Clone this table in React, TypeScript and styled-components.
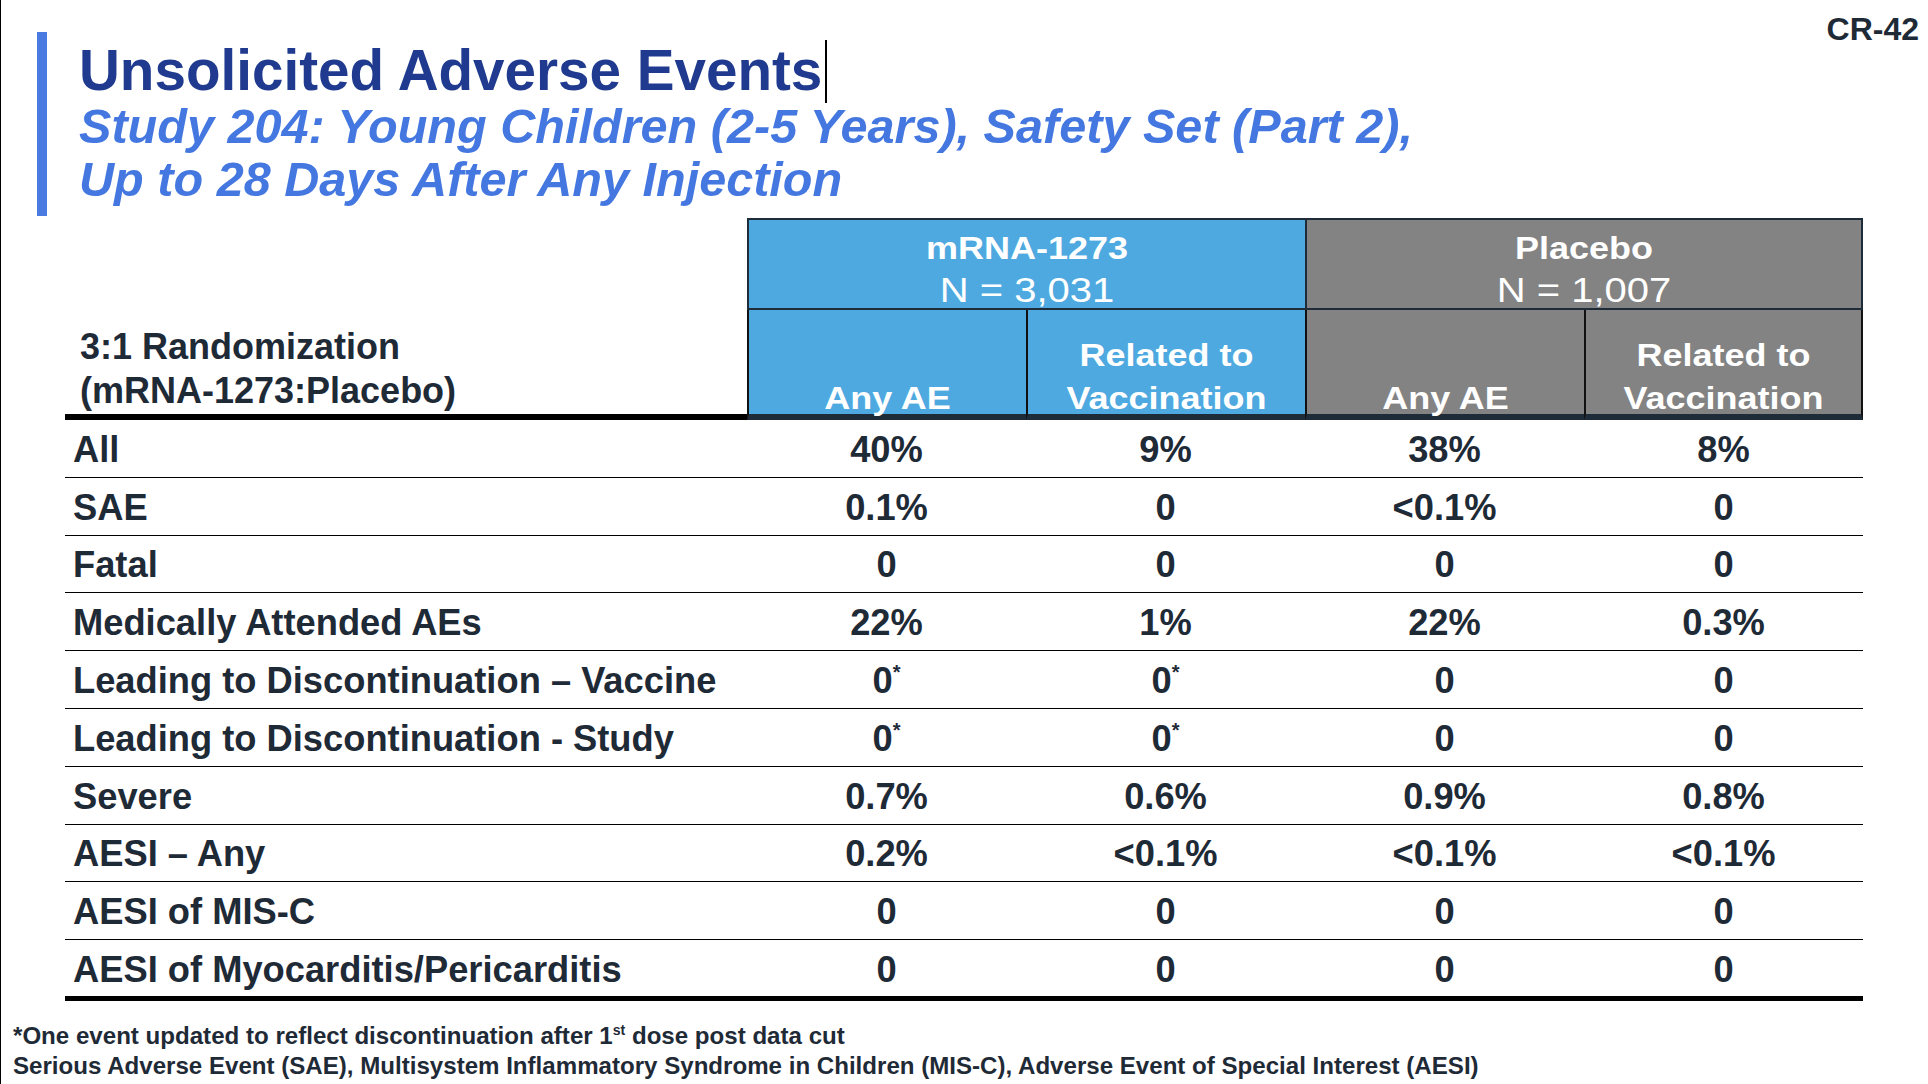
import React from "react";
import styled, { createGlobalStyle } from "styled-components";

const GlobalStyle = createGlobalStyle`
  html, body {
    margin: 0;
    padding: 0;
    overflow: hidden;
    background: #fff;
  }
  * {
    box-sizing: border-box;
  }
`;

// Page
const Page = styled.div`
  width: 1928px;
  height: 1084px;
  border-left: 1px solid #000;
  background: #fff;
  font-family: "Liberation Sans", Arial, sans-serif;
  color: #1f2a37;
  display: flex;
  flex-direction: column;
`;

// Top area
const TopBar = styled.div`
  display: flex;
  justify-content: space-between;
  align-items: flex-start;
`;

const TitleBlock = styled.div`
  margin: 32px 0 0 36px;
  height: 184px;
  border-left: 10px solid #4a7be0;
  padding: 10px 0 0 32px;
`;

const Title = styled.h1`
  position: relative;
  display: inline-block;
  margin: 0;
  font-size: 56.6px;
  line-height: 58px;
  font-weight: 700;
  color: #1f3a8e;
`;

const Caret = styled.span`
  position: absolute;
  right: -5px;
  top: -2px;
  width: 2px;
  height: 63px;
  background: #000;
`;

const Subtitle = styled.h2`
  margin: 0;
  font-size: 48.6px;
  line-height: 53px;
  font-weight: 700;
  font-style: italic;
  color: #4478e0;
`;

const SlideNo = styled.div`
  margin: 11px 9px 0 0;
  font-size: 32px;
  line-height: 36px;
  font-weight: 700;
  color: #1f2a37;
`;

// Table
const Table = styled.div`
  margin: 2px 0 0 64px;
  width: 1798px;
`;

const HeadGrid = styled.div`
  display: grid;
  grid-template-columns: 682px repeat(4, 1fr);
  grid-template-rows: 92px 110px;
`;

const LabelHead = styled.div`
  grid-column: 1;
  grid-row: 1 / span 2;
  display: flex;
  flex-direction: column;
  justify-content: flex-end;
  padding: 0 0 1px 15px;
  border-bottom: 6px solid #000;
  font-size: 36px;
  line-height: 44px;
  font-weight: 700;
`;

const GroupHead = styled.div<{ $bg: string; $last?: boolean }>`
  grid-column: span 2;
  background: ${({ $bg }) => $bg};
  border-top: 2px solid #1e2b38;
  border-left: 2px solid #1e2b38;
  border-right: ${({ $last }) => ($last ? "2px solid #1e2b38" : "none")};
  border-bottom: 2px solid #1e2b38;
  padding-top: 7px;
  display: flex;
  flex-direction: column;
  align-items: center;
  color: #fff;
`;

const GroupName = styled.div`
  font-size: 36px;
  line-height: 50px;
  font-weight: 700;
  transform: scaleY(0.86);
  transform-origin: 50% 0;
`;

const GroupN = styled.div`
  font-size: 40px;
  line-height: 46px;
  font-weight: 400;
  margin-top: -7px;
  transform: scaleY(0.86);
  transform-origin: 50% 0;
`;

const SubHead = styled.div<{ $bg: string; $last?: boolean }>`
  background: ${({ $bg }) => $bg};
  border-left: 2px solid #111;
  border-right: ${({ $last }) => ($last ? "2px solid #111" : "none")};
  border-bottom: 6px solid #1e2b38;
  display: flex;
  flex-direction: column;
  justify-content: flex-end;
  align-items: center;
  color: #fff;
`;

const SubText = styled.div`
  font-size: 36px;
  line-height: 50px;
  font-weight: 700;
  text-align: center;
  margin-bottom: -6px;
  transform: scaleY(0.86);
  transform-origin: 50% 100%;
`;

const Row = styled.div<{ $last?: boolean }>`
  display: grid;
  grid-template-columns: 682px repeat(4, 1fr);
  align-items: center;
  padding-top: 3px;
  height: ${({ $last }) => ($last ? "61px" : "57.8px")};
  border-bottom: ${({ $last }) => ($last ? "5px" : "1px")} solid #000;
  font-size: 36.3px;
  font-weight: 700;
`;

const RowLabel = styled.div`
  padding-left: 8px;
  white-space: nowrap;
`;

const Value = styled.div`
  text-align: center;
`;

const Star = styled.sup`
  font-size: 20px;
  vertical-align: 14px;
  line-height: 0;
`;

// Footnotes
const Notes = styled.div`
  margin: 20px 0 0 12px;
  font-size: 24.1px;
  line-height: 30px;
  font-weight: 700;
`;

const Sup = styled.sup`
  font-size: 14px;
  vertical-align: 9px;
  line-height: 0;
`;

const BLUE = "#4ea9e0";
const GREY = "#838383";

const rows: string[][] = [
  ["All", "40%", "9%", "38%", "8%"],
  ["SAE", "0.1%", "0", "<0.1%", "0"],
  ["Fatal", "0", "0", "0", "0"],
  ["Medically Attended AEs", "22%", "1%", "22%", "0.3%"],
  ["Leading to Discontinuation \u2013 Vaccine", "0*", "0*", "0", "0"],
  ["Leading to Discontinuation - Study", "0*", "0*", "0", "0"],
  ["Severe", "0.7%", "0.6%", "0.9%", "0.8%"],
  ["AESI \u2013 Any", "0.2%", "<0.1%", "<0.1%", "<0.1%"],
  ["AESI of MIS-C", "0", "0", "0", "0"],
  ["AESI of Myocarditis/Pericarditis", "0", "0", "0", "0"],
];

const renderValue = (v: string) =>
  v.endsWith("*") ? (
    <>
      {v.slice(0, -1)}
      <Star>*</Star>
    </>
  ) : (
    v
  );

const App = () => {
  return (
    <>
      <GlobalStyle />
      <Page>
        <TopBar>
          <TitleBlock>
            <Title>
              Unsolicited Adverse Events
              <Caret />
            </Title>
            <Subtitle>
              Study 204: Young Children (2-5 Years), Safety Set (Part 2),
              <br />
              Up to 28 Days After Any Injection
            </Subtitle>
          </TitleBlock>
          <SlideNo>CR-42</SlideNo>
        </TopBar>

        <Table>
          <HeadGrid>
            <LabelHead>
              <div>3:1 Randomization</div>
              <div>(mRNA-1273:Placebo)</div>
            </LabelHead>
            <GroupHead $bg={BLUE}>
              <GroupName>mRNA-1273</GroupName>
              <GroupN>N = 3,031</GroupN>
            </GroupHead>
            <GroupHead $bg={GREY} $last>
              <GroupName>Placebo</GroupName>
              <GroupN>N = 1,007</GroupN>
            </GroupHead>
            <SubHead $bg={BLUE}>
              <SubText>Any AE</SubText>
            </SubHead>
            <SubHead $bg={BLUE}>
              <SubText>
                Related to
                <br />
                Vaccination
              </SubText>
            </SubHead>
            <SubHead $bg={GREY}>
              <SubText>Any AE</SubText>
            </SubHead>
            <SubHead $bg={GREY} $last>
              <SubText>
                Related to
                <br />
                Vaccination
              </SubText>
            </SubHead>
          </HeadGrid>

          {rows.map((r, i) => (
            <Row key={r[0]} $last={i === rows.length - 1}>
              <RowLabel>{r[0]}</RowLabel>
              {r.slice(1).map((v, j) => (
                <Value key={j}>{renderValue(v)}</Value>
              ))}
            </Row>
          ))}
        </Table>

        <Notes>
          <div>
            *One event updated to reflect discontinuation after 1<Sup>st</Sup>{" "}
            dose post data cut
          </div>
          <div>
            Serious Adverse Event (SAE), Multisystem Inflammatory Syndrome in
            Children (MIS-C), Adverse Event of Special Interest (AESI)
          </div>
        </Notes>
      </Page>
    </>
  );
};

export default App;
